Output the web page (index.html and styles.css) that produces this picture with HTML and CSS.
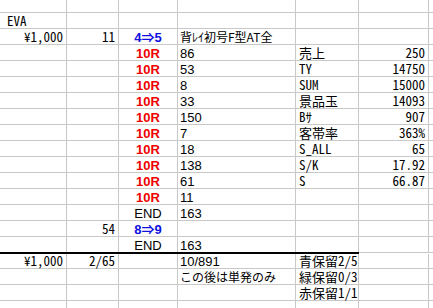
FILE: index.html
```html
<!DOCTYPE html>
<html lang="ja">
<head>
<meta charset="utf-8">
<link rel="stylesheet" href="styles.css">
</head>
<body>
<div class="sheet top">
  <div></div><div></div><div></div><div></div><div></div><div></div><div></div><div></div>

  <div></div><div class="m">EVA</div><div></div><div></div><div></div><div></div><div></div><div></div>

  <div></div><div class="m r">¥1,000</div><div class="m r">11</div><div class="k b blue">4⇒5</div><div class="j">背ﾚｲ初号F型AT全</div><div></div><div></div><div></div>

  <div></div><div></div><div></div><div class="k b red">10R</div><div class="p">86</div><div class="m">売上</div><div class="m r">250</div><div></div>
  <div></div><div></div><div></div><div class="k b red">10R</div><div class="p">53</div><div class="m">TY</div><div class="m r">14750</div><div></div>
  <div></div><div></div><div></div><div class="k b red">10R</div><div class="p">8</div><div class="m">SUM</div><div class="m r">15000</div><div></div>
  <div></div><div></div><div></div><div class="k b red">10R</div><div class="p">33</div><div class="m">景品玉</div><div class="m r">14093</div><div></div>
  <div></div><div></div><div></div><div class="k b red">10R</div><div class="p">150</div><div class="m">Bｻ</div><div class="m r">907</div><div></div>
  <div></div><div></div><div></div><div class="k b red">10R</div><div class="p">7</div><div class="m">客帯率</div><div class="m r">363%</div><div></div>
  <div></div><div></div><div></div><div class="k b red">10R</div><div class="p">18</div><div class="m">S_ALL</div><div class="m r">65</div><div></div>
  <div></div><div></div><div></div><div class="k b red">10R</div><div class="p">138</div><div class="m">S/K</div><div class="m r">17.92</div><div></div>
  <div></div><div></div><div></div><div class="k b red">10R</div><div class="p">61</div><div class="m">S</div><div class="m r">66.87</div><div></div>
  <div></div><div></div><div></div><div class="k b red">10R</div><div class="p">11</div><div></div><div></div><div></div>

  <div></div><div></div><div></div><div class="k">END</div><div class="p">163</div><div></div><div></div><div></div>
  <div></div><div></div><div class="m r">54</div><div class="k b blue">8⇒9</div><div></div><div></div><div></div><div></div>
  <div></div><div></div><div></div><div class="k">END</div><div class="p">163</div><div></div><div></div><div></div>
</div>
<div class="sheet bottom">
  <div></div><div class="m r">¥1,000</div><div class="m r">2/65</div><div></div><div class="p">10/891</div><div class="m">青保留2/5</div><div></div><div></div>
  <div></div><div></div><div></div><div></div><div class="j">この後は単発のみ</div><div class="m">緑保留0/3</div><div></div><div></div>
  <div></div><div></div><div></div><div></div><div></div><div class="m">赤保留1/1</div><div></div><div></div>
  <div></div><div></div><div></div><div></div><div></div><div></div><div></div><div></div>
</div>
</body>
</html>
```
FILE: styles.css
```css
html, body {
  margin: 0;
  padding: 0;
  background: #ffffff;
}

.sheet {
  display: grid;
  grid-template-columns: 3px 62px 51px 58px 117px 62px 69px 4px;
  gap: 1px;
  width: 433px;
  background: #c8c8c8;
}

.top {
  grid-template-rows: 12px repeat(15, 15px);
}

.bottom {
  grid-template-rows: 14px 15px 15px 7px;
  padding-top: 2px;
  background:
    linear-gradient(#000, #000) 0 0 / 359px 2px no-repeat,
    linear-gradient(#fff, #fff) 0 1px / 100% 1px no-repeat,
    #c8c8c8;
}

.sheet > div {
  background: #ffffff;
  display: flex;
  align-items: flex-end;
  padding: 0 3px;
  white-space: nowrap;
  min-width: 0;
  color: #000;
  font-family: "Noto Sans CJK JP", sans-serif;
  font-size: 13px;
  line-height: 15px;
}

.sheet > div.m {
  font-family: "Noto Sans Mono CJK JP", "Liberation Mono", monospace;
  font-size: 13px;
  line-height: 15px;
}

.sheet > div.p {
  font-family: "Liberation Sans Narrow", "Liberation Sans", sans-serif;
  font-size: 13px;
  line-height: 13px;
  padding-left: 2px;
}

.sheet > div.j {
  font-family: "Noto Sans CJK JP", sans-serif;
  font-size: 12px;
  line-height: 14px;
  padding-left: 2px;
}

.sheet > div.k {
  font-family: "Liberation Sans Narrow", "Liberation Sans", "Noto Sans CJK JP", sans-serif;
  font-size: 13px;
  line-height: 13px;
  justify-content: center;
}

.sheet > div.r {
  justify-content: flex-end;
}

.sheet > div.b {
  font-weight: bold;
}

.sheet > div.red {
  color: #ee0000;
}

.sheet > div.blue {
  color: #1010e0;
}
```
